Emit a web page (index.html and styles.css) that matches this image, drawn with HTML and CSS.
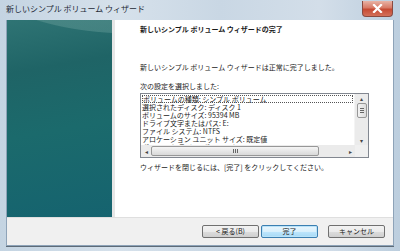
FILE: index.html
```html
<!DOCTYPE html>
<html lang="ja">
<head>
  <meta charset="UTF-8">
  <title>新しいシンプル ボリューム ウィザード</title>
  <link rel="stylesheet" href="styles.css">
</head>
<body>
  <div class="window">
    <div class="titlebar">
      <div class="title">新しいシンプル ボリューム ウィザード</div>
      <div class="close-button">
        <svg width="11" height="9" viewBox="0 0 11 9">
          <path d="M2 1 L9 8 M9 1 L2 8" stroke="#fff" stroke-width="2.2" stroke-linecap="square"/>
        </svg>
      </div>
    </div>

    <div class="client">
      <div class="main">
        <div class="side"></div>
        <div class="content">
          <div class="heading">新しいシンプル ボリューム ウィザードの完了</div>
          <p class="message">新しいシンプル ボリューム ウィザードは正常に完了しました。</p>
          <p class="label">次の設定を選択しました:</p>

          <div class="listbox">
            <div class="list-area">
              <div class="list-lines">
                <div class="list-line focused">ボリュームの種類: シンプル ボリューム</div>
                <div class="list-line">選択されたディスク: ディスク 1</div>
                <div class="list-line">ボリュームのサイズ: 95394 MB</div>
                <div class="list-line">ドライブ文字またはパス: E:</div>
                <div class="list-line">ファイル システム: NTFS</div>
                <div class="list-line">アロケーション ユニット サイズ: 既定値</div>
                <div class="list-line">ボリューム ラベル: ボリューム</div>
              </div>
              <div class="vscroll">
                <span class="arrow">&#9652;</span>
                <div class="vthumb"><span></span><span></span><span></span></div>
                <div class="vtrack"></div>
                <span class="arrow">&#9662;</span>
              </div>
            </div>
            <div class="hscroll">
              <span class="arrow">&#9666;</span>
              <div class="hthumb"><span></span><span></span><span></span></div>
              <div class="htrack"></div>
              <span class="arrow">&#9656;</span>
              <div class="corner"></div>
            </div>
          </div>

          <p class="closing">ウィザードを閉じるには、[完了] をクリックしてください。</p>
        </div>
      </div>

      <div class="footer">
        <button type="button" class="btn">&lt; 戻る(B)</button>
        <button type="button" class="btn default">完了</button>
        <button type="button" class="btn cancel">キャンセル</button>
      </div>
    </div>
  </div>
</body>
</html>
```

FILE: styles.css
```css
body {
  margin: 0;
  padding: 0;
  font-family: "Noto Sans CJK JP", "Noto Sans", sans-serif;
  color: #1a1a1a;
}

.window {
  width: 400px;
  height: 251px;
  display: flex;
  flex-direction: column;
  background: linear-gradient(90deg, #c4d4e2 0%, #d6e1eb 30%, #c9d7e4 55%, #d3dee9 80%, #bccede 100%);
  overflow: hidden;
}

.titlebar {
  height: 20px;
  display: flex;
  justify-content: space-between;
  align-items: flex-start;
  padding: 0 7px 0 6px;
}

.title {
  font-size: 8px;
  line-height: 8px;
  padding-top: 5px;
  color: #1e2a36;
}

.close-button {
  width: 31px;
  height: 16px;
  margin-top: 1px;
  border: 1px solid #8a4a40;
  border-top: none;
  border-radius: 0 0 4px 4px;
  background: linear-gradient(#e8b3a6 0%, #d87a66 45%, #c64a33 55%, #d37059 100%);
  display: flex;
  align-items: center;
  justify-content: center;
  box-sizing: border-box;
}

.client {
  flex: 1;
  margin: 0 6px 5px 6px;
  display: flex;
  flex-direction: column;
  border: 1px solid #8ea3b8;
  border-top: none;
  box-shadow: 0 1px 0 #5d6b78;
}

.main {
  height: 197px;
  display: flex;
}

.side {
  width: 105px;
  border-right: 3px solid #e6e6e6;
  background:
    radial-gradient(ellipse 220px 90px at 125px -50px, rgba(120, 170, 165, 0.35) 0%, rgba(120, 170, 165, 0.35) 70%, rgba(0, 0, 0, 0) 71%),
    linear-gradient(170deg, #2f7474 0%, #1f6466 25%, #1b6a6c 55%, #15636f 100%);
}

.content {
  flex: 1;
  background: #fff;
  padding: 5px 0 0 25px;
  font-size: 7px;
  line-height: 8px;
}

.heading {
  font-weight: bold;
  font-size: 7px;
  line-height: 8px;
  margin-bottom: 30px;
}

.message {
  margin: 0 0 11px 0;
}

.label {
  margin: 0 0 3px 0;
}

.listbox {
  width: 229px;
  height: 65px;
  border: 1px solid #828790;
  box-sizing: border-box;
  display: flex;
  flex-direction: column;
  background: #fff;
}

.list-area {
  flex: 1;
  display: flex;
  overflow: hidden;
}

.list-lines {
  flex: 1;
  overflow: hidden;
  padding: 1px 1px 0 1px;
}

.list-line {
  white-space: nowrap;
  height: 8px;
  line-height: 8px;
}

.list-line.focused {
  outline: 1px dotted #555;
  outline-offset: -1px;
  padding-left: 1px;
}

.vscroll {
  width: 13px;
  background: #ebebeb;
  border-left: 1px solid #f4f4f4;
  display: flex;
  flex-direction: column;
  align-items: center;
}

.arrow {
  font-size: 6px;
  line-height: 9px;
  color: #444;
  width: 13px;
  text-align: center;
}

.vthumb {
  width: 10px;
  height: 15px;
  border: 1px solid #979797;
  border-radius: 2px;
  background: linear-gradient(90deg, #f3f3f3, #dcdcdc);
  box-sizing: border-box;
  display: flex;
  flex-direction: column;
  justify-content: center;
  align-items: center;
  gap: 1px;
}

.vthumb span {
  width: 4px;
  height: 1px;
  background: #666;
}

.vtrack {
  flex: 1;
}

.hscroll {
  height: 12px;
  display: flex;
  align-items: center;
  background: #ebebeb;
}

.hscroll .arrow {
  width: 10px;
}

.hthumb {
  width: 168px;
  height: 10px;
  border: 1px solid #979797;
  border-radius: 2px;
  background: linear-gradient(#f5f5f5, #d9d9d9);
  box-sizing: border-box;
  display: flex;
  align-items: center;
  justify-content: center;
  gap: 1px;
}

.hthumb span {
  width: 1px;
  height: 4px;
  background: #666;
}

.htrack {
  flex: 1;
}

.corner {
  width: 13px;
  height: 12px;
  background: #f0f0f0;
}

.closing {
  margin: 5px 0 0 0;
}

.footer {
  flex: 1;
  background: #f0f0f0;
  border-top: 1px solid #dfdfdf;
  display: flex;
  align-items: center;
  justify-content: flex-end;
  padding: 0 8px 0 0;
  gap: 2px;
}

.btn {
  width: 57px;
  height: 13px;
  padding: 0;
  font-family: "Noto Sans CJK JP", "Noto Sans", sans-serif;
  font-size: 7px;
  line-height: 7px;
  color: #1a1a1a;
  border: 1px solid #707070;
  border-radius: 2px;
  background: linear-gradient(#f2f2f2 0%, #ebebeb 50%, #dddddd 51%, #cfcfcf 100%);
}

.btn.default {
  border-color: #3c7fb1;
  background: linear-gradient(#eaf6fd 0%, #d9f0fc 50%, #bee6fd 51%, #a7d9f5 100%);
  box-shadow: inset 0 0 0 1px #b9e3f9;
}

.btn.cancel {
  margin-left: 8px;
}
```
